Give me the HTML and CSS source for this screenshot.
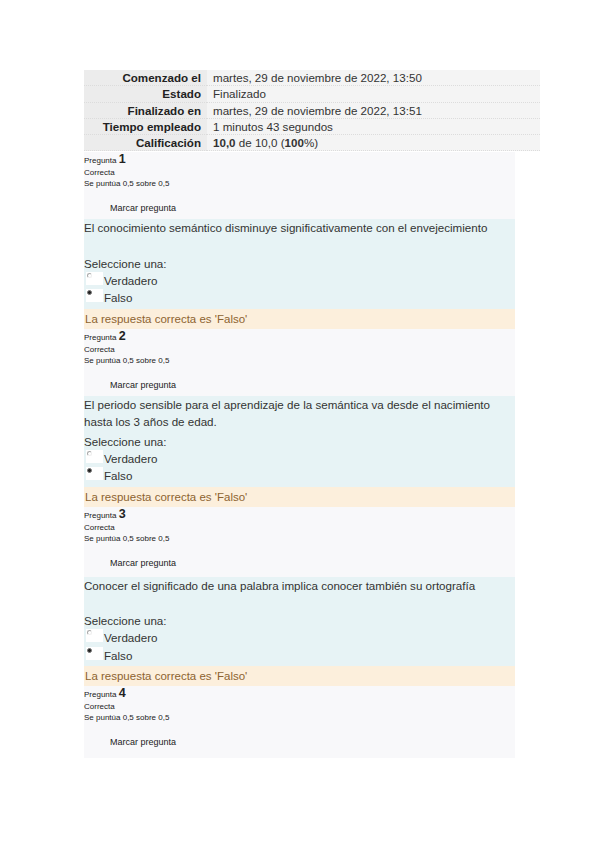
FILE: index.html
```html
<!DOCTYPE html>
<html lang="es">
<head>
<meta charset="utf-8">
<link rel="stylesheet" href="styles.css">
</head>
<body>
<div class="page">
  <table class="summary">
    <tr><th>Comenzado el</th><td>martes, 29 de noviembre de 2022, 13:50</td></tr>
    <tr><th>Estado</th><td>Finalizado</td></tr>
    <tr><th>Finalizado en</th><td>martes, 29 de noviembre de 2022, 13:51</td></tr>
    <tr><th>Tiempo empleado</th><td>1 minutos 43 segundos</td></tr>
    <tr><th>Calificación</th><td><b>10,0</b> de 10,0 (<b>100</b>%)</td></tr>
  </table>

  <div class="que">
    <div class="info">
      <div class="qno">Pregunta <span class="num">1</span></div>
      <div class="state">Correcta</div>
      <div class="grade">Se puntúa 0,5 sobre 0,5</div>
      <div class="flag">Marcar pregunta</div>
    </div>
    <div class="content">
      <div class="qtext">El conocimiento semántico disminuye significativamente con el envejecimiento</div>
      <div class="spacer"></div>
      <div class="prompt">Seleccione una:</div>
      <div class="opt"><span class="radio"></span><span class="lbl">Verdadero</span></div>
      <div class="opt"><span class="radio on"></span><span class="lbl">Falso</span></div>
    </div>
    <div class="feedback">La respuesta correcta es 'Falso'</div>
  </div>

  <div class="que">
    <div class="info">
      <div class="qno">Pregunta <span class="num">2</span></div>
      <div class="state">Correcta</div>
      <div class="grade">Se puntúa 0,5 sobre 0,5</div>
      <div class="flag">Marcar pregunta</div>
    </div>
    <div class="content">
      <div class="qtext">El periodo sensible para el aprendizaje de la semántica va desde el nacimiento hasta los 3 años de edad.</div>
      <div class="prompt gap">Seleccione una:</div>
      <div class="opt"><span class="radio"></span><span class="lbl">Verdadero</span></div>
      <div class="opt"><span class="radio on"></span><span class="lbl">Falso</span></div>
    </div>
    <div class="feedback">La respuesta correcta es 'Falso'</div>
  </div>

  <div class="que">
    <div class="info tall">
      <div class="qno">Pregunta <span class="num">3</span></div>
      <div class="state">Correcta</div>
      <div class="grade">Se puntúa 0,5 sobre 0,5</div>
      <div class="flag">Marcar pregunta</div>
    </div>
    <div class="content">
      <div class="qtext">Conocer el significado de una palabra implica conocer también su ortografía</div>
      <div class="spacer"></div>
      <div class="prompt">Seleccione una:</div>
      <div class="opt"><span class="radio"></span><span class="lbl">Verdadero</span></div>
      <div class="opt"><span class="radio on"></span><span class="lbl">Falso</span></div>
    </div>
    <div class="feedback">La respuesta correcta es 'Falso'</div>
  </div>

  <div class="que">
    <div class="info last">
      <div class="qno">Pregunta <span class="num">4</span></div>
      <div class="state">Correcta</div>
      <div class="grade">Se puntúa 0,5 sobre 0,5</div>
      <div class="flag">Marcar pregunta</div>
    </div>
  </div>
</div>
</body>
</html>
```

FILE: styles.css
```css
html, body {
  margin: 0;
  padding: 0;
  background: #ffffff;
}
body {
  font-family: "Liberation Sans", Arial, sans-serif;
  color: #333333;
}
.page {
  padding: 70px 0 0 84px;
  width: 456px;
}
.summary {
  width: 456px;
  border-collapse: collapse;
  font-size: 11.6px;
  margin-bottom: 1px;
}
.summary th,
.summary td {
  height: 15.3px;
  padding: 0 6px;
  border-bottom: 1px dotted #dcdcdc;
  line-height: 15px;
  vertical-align: middle;
}
.summary th {
  width: 111px;
  text-align: right;
  background: #ececec;
  font-weight: bold;
  color: #222;
  white-space: nowrap;
}
.summary td {
  background: #f4f4f4;
  color: #333;
}
.que {
  width: 431px;
}
.info {
  background: #f8f8fa;
  padding: 1px 0 0 0;
  height: 67px;
  font-size: 8px;
  color: #222;
  box-sizing: border-box;
}
.info.tall {
  height: 70px;
}
.info.last {
  height: 72px;
}
.qno {
  line-height: 12px;
}
.num {
  font-size: 12.5px;
  font-weight: bold;
}
.state, .grade {
  line-height: 11px;
}
.flag {
  margin-top: 13px;
  padding-left: 26px;
  font-size: 9px;
  line-height: 12px;
}
.content {
  background: #e7f3f5;
  padding: 0 0 2px;
  font-size: 11.6px;
  color: #333;
}
.qtext {
  line-height: 17.5px;
  padding-top: 0;
}
.spacer {
  height: 18px;
}
.prompt {
  line-height: 17px;
}
.prompt.gap {
  margin-top: 2px;
}
.opt {
  display: flex;
  align-items: flex-start;
  line-height: 17.5px;
}
.radio {
  width: 17px;
  height: 13px;
  margin-left: 2px;
  background: #ffffff;
  margin-right: 1px;
  position: relative;
}
.radio::after {
  content: "";
  position: absolute;
  left: 1px;
  top: 1px;
  width: 3px;
  height: 3px;
  border-radius: 50%;
  border: 1px solid #a8a8a8;
  border-right-color: #eeeeee;
  border-bottom-color: #eeeeee;
  background: #fff;
}
.radio.on::after {
  background: #222;
  border-color: #777;
}
.feedback {
  background: #fcefdc;
  color: #8d6330;
  font-size: 11.5px;
  line-height: 20px;
  padding: 0 1px;
}
```
